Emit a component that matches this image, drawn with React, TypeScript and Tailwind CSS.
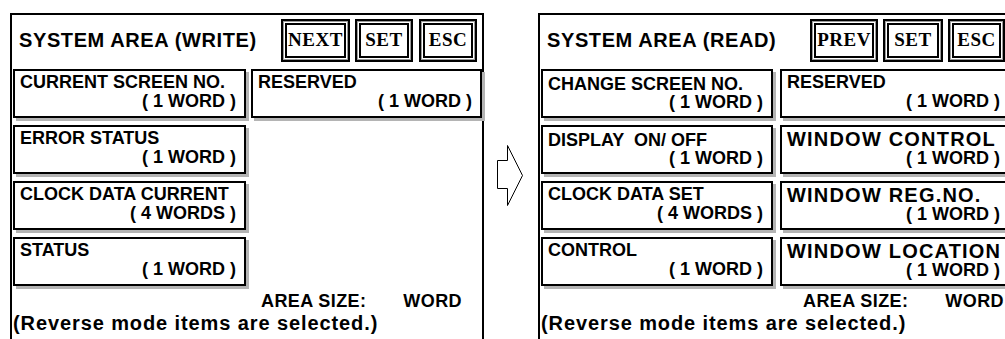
import type { ReactNode } from 'react';

type Item = {
  label: string;
  size: string;
  lcls?: string;
  scls?: string;
};

type PanelProps = {
  title: string;
  buttons: { text: string; w: string; ml: string }[];
  gridCls: string;
  rows: (Item | null)[][];
  areaCls: string;
};

const WRITE: PanelProps = {
  title: 'SYSTEM AREA (WRITE)',
  buttons: [
    { text: 'NEXT', w: 'w-[69px]', ml: 'ml-0' },
    { text: 'SET', w: 'w-[58px]', ml: 'ml-[5px]' },
    { text: 'ESC', w: 'w-[58px]', ml: 'ml-[6px]' },
  ],
  gridCls: 'grid-cols-[233px_1fr] gap-x-[5px]',
  rows: [
    [{ label: 'CURRENT SCREEN NO.', size: '( 1 WORD )' }, { label: 'RESERVED', size: '( 1 WORD )' }],
    [{ label: 'ERROR STATUS', size: '( 1 WORD )' }, null],
    [{ label: 'CLOCK DATA CURRENT', size: '( 4 WORDS )' }, null],
    [{ label: 'STATUS', size: '( 1 WORD )' }, null],
  ],
  areaCls: 'pl-[249px]',
};

// the WINDOW labels are set larger and spaced wider
const BIG = 'text-[20px] leading-[20px] tracking-[1.2px] pt-[2px]';

const READ: PanelProps = {
  title: 'SYSTEM AREA (READ)',
  buttons: [
    { text: 'PREV', w: 'w-[68px]', ml: 'ml-0' },
    { text: 'SET', w: 'w-[60px]', ml: 'ml-[5px]' },
    { text: 'ESC', w: 'w-[57px]', ml: 'ml-[5px]' },
  ],
  gridCls: 'grid-cols-[232px_1fr] gap-x-[7px]',
  rows: [
    [
      { label: 'CHANGE SCREEN NO.', size: '( 1 WORD )', lcls: 'pt-[4px]', scls: '-mt-[1px]' },
      { label: 'RESERVED', size: '( 1 WORD )' },
    ],
    [
      { label: 'DISPLAY  ON/ OFF', size: '( 1 WORD )', lcls: 'pt-[4px]', scls: '-mt-[1px]' },
      { label: 'WINDOW CONTROL', size: '( 1 WORD )', lcls: BIG },
    ],
    [
      { label: 'CLOCK DATA SET', size: '( 4 WORDS )' },
      { label: 'WINDOW REG.NO.', size: '( 1 WORD )', lcls: BIG },
    ],
    [
      { label: 'CONTROL', size: '( 1 WORD )' },
      { label: 'WINDOW LOCATION', size: '( 1 WORD )', lcls: BIG },
    ],
  ],
  areaCls: 'pl-[263px]',
};

function Button({ children, w, ml }: { children: ReactNode; w: string; ml: string }) {
  return (
    <div className={`${w} ${ml} h-[43px] border-2 border-black p-[2px] shadow-[inset_0_0_0_1px_#9a9a9a]`}>
      <div className="flex h-full items-center justify-center border-2 border-black font-['Liberation_Serif',serif] text-[19px] font-bold tracking-[0.5px]">
        {children}
      </div>
    </div>
  );
}

function Box({ item }: { item: Item | null }) {
  if (!item) return <div />;
  return (
    <div className="h-[49px] overflow-hidden border-2 border-black bg-white shadow-[3px_3px_0_#b4b4b4]">
      <div className={`whitespace-pre pl-[5px] text-[18px] leading-[19px] ${item.lcls ?? 'pt-[2px]'}`}>
        {item.label}
      </div>
      <div className={`whitespace-pre pr-[8px] text-right text-[18px] leading-[19px] ${item.scls ?? ''}`}>
        {item.size}
      </div>
    </div>
  );
}

function Panel({ p }: { p: PanelProps }) {
  return (
    <div className="flex h-[330px] w-[474px] shrink-0 flex-col border-2 border-b-0 border-black">
      <div className="flex h-[54px] items-start pt-[4px] pr-[5px]">
        <div className="pl-[7px] pt-[9px] text-[20px] leading-[24px] tracking-[0.6px]">{p.title}</div>
        <div className="ml-auto flex">
          {p.buttons.map((b) => (
            <Button key={b.text} w={b.w} ml={b.ml}>
              {b.text}
            </Button>
          ))}
        </div>
      </div>
      <div className={`grid ${p.gridCls} gap-y-[7px] pl-[1px]`}>
        {p.rows.flat().map((it, i) => (
          <Box key={i} item={it} />
        ))}
      </div>
      <div className={`mt-[5px] flex text-[18px] leading-[20px] tracking-[0.4px] ${p.areaCls}`}>
        <span>AREA SIZE:</span>
        <span className="ml-[37px]">WORD</span>
      </div>
      <div className="mt-[1px] whitespace-nowrap pl-[1px] text-[20px] leading-[22px] tracking-[0.9px]">
        (Reverse mode items are selected.)
      </div>
    </div>
  );
}

function Arrow() {
  return (
    <svg width="28" height="64" viewBox="0 0 28 64" fill="none">
      <polygon
        points="1.5,16.5 11.5,16.5 11.5,1.5 26.5,31.5 11.5,61.5 11.5,44.5 1.5,44.5"
        stroke="#000"
        strokeWidth="1"
        fill="#fff"
      />
    </svg>
  );
}

export default function App() {
  return (
    <div className="flex h-[339px] w-[1005px] overflow-hidden bg-white pl-[10px] pt-[13px] font-['Liberation_Sans',sans-serif] font-bold text-black">
      <Panel p={WRITE} />
      <div className="w-[54px] shrink-0 pl-[12px] pt-[131px]">
        <Arrow />
      </div>
      <Panel p={READ} />
    </div>
  );
}
